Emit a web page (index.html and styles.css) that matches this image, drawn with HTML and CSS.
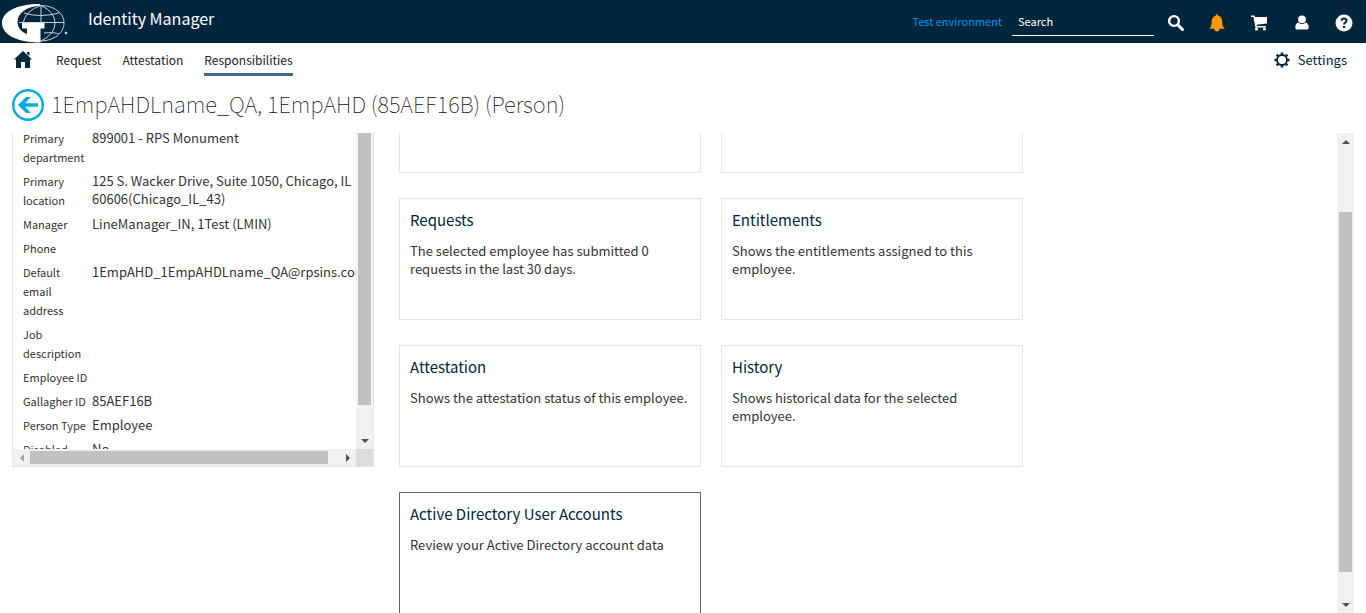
FILE: index.html
```html
<!DOCTYPE html>
<html lang="en">
<head>
<meta charset="utf-8">
<title>Identity Manager</title>
<link rel="stylesheet" href="styles.css">
</head>
<body>
<header class="topbar">
  <svg class="logo" viewBox="0 0 68 40" aria-hidden="true">
    <g fill="none" stroke="#c9d3da" stroke-width="1">
      <path d="M40 1.500C54 1.500 64 9 64 19S54 37 40 37"/>
      <path d="M41 1.500Q55 8 55 19T41 37M41 1.500Q26 6 23 19M41 1.500V19M19 18.500h45M24 9Q40 14 59 9M44 29Q54 28 59 30"/>
    </g>
    <path fill="#fff" d="M40 0C16 0 2 8 2 19s14 19.500 38.500 19.500V24.500h4V19H22v5.500h5V30C21 28 17.500 23 17.500 18 17.500 9 27 2.500 40 1.500z"/>
    <circle cx="66" cy="29" r="1.300" fill="#c9d3da"/>
  </svg>
  <span class="product">Identity Manager</span>
  <span class="environment">Test environment</span>
  <input class="search" type="text" placeholder="Search" aria-label="Search">
  <div class="tools">
    <button class="tool" aria-label="Search"><svg viewBox="0 0 18 18"><circle cx="7" cy="7" r="4.900" fill="none" stroke="#fff" stroke-width="2.400"/><path d="M11 11l4.500 4.500" stroke="#fff" stroke-width="3" stroke-linecap="round"/></svg></button>
    <button class="tool" aria-label="Notifications"><svg viewBox="1 0 16 17"><path fill="#ff9800" d="M8 .5c.8 0 1.200.5 1.200 1.100C12 2.200 13 4.500 13 7.500c0 3.500 1 5 2.500 6.500H10.500a2.500 2.500 0 0 1-5 0H.8C2 12.500 3 11 3 7.500 3 4.500 4 2.200 6.800 1.600 6.800 1 7.200.5 8 .5z"/></svg></button>
    <button class="tool" aria-label="Shopping cart"><svg viewBox="1 0 18 18"><path fill="#fff" d="M1 1.500h3.600l.4 1.500H17v6.500L6.500 10.800l.4 1.200H15.800v1.500H5.400L3.400 3H1z"/><circle cx="6.500" cy="15" r="1.600" fill="#fff"/><circle cx="14.500" cy="15" r="1.600" fill="#fff"/></svg></button>
    <button class="tool" aria-label="Profile"><svg viewBox="0 0 18 18"><circle cx="9" cy="5.300" r="3.900" fill="#fff"/><path fill="#fff" d="M5.500 8.500C6.500 9.700 7.600 10 9 10s2.500-.3 3.500-1.500c2.200.3 3.200 2.500 3.200 4.700 0 1.600-.8 2.300-2 2.300H4.300c-1.200 0-2-.7-2-2.300 0-2.200 1-4.400 3.200-4.700z"/></svg></button>
    <button class="tool" aria-label="Help"><svg viewBox="0 0 18 18"><circle cx="9" cy="9" r="8.500" fill="#fff"/><path d="M6.500 6.800C6.600 5.200 7.600 4.500 9 4.500s2.500.8 2.500 2.200c0 1.800-2.400 1.800-2.400 3.800" fill="none" stroke="#00263e" stroke-width="2"/><path d="M8 12h2.200v2H8z" fill="#00263e"/></svg></button>
  </div>
</header>
<nav class="menu">
  <a class="home" href="#" aria-label="Home"><svg viewBox="0 0 18 17"><path fill="#00263e" d="M9 0l9 8.500h-2V17h-5v-6H7v6H2V8.500H0zM13 1h2.500v4L13 3z"/></svg></a>
  <a class="menu-item" href="#">Request</a>
  <a class="menu-item" href="#">Attestation</a>
  <a class="menu-item current" href="#">Responsibilities</a>
  <a class="settings" href="#"><svg viewBox="0 0 16 16"><circle cx="8" cy="8" r="5" fill="none" stroke="#00263e" stroke-width="1.800"/><path stroke="#00263e" stroke-width="2.600" d="M8 .5v2M8 13.500v2M.5 8h2M13.500 8h2M2.700 2.700l1.400 1.400M11.900 11.900l1.400 1.400M2.700 13.300l1.400-1.400M11.900 4.100l1.400-1.400"/></svg>Settings</a>
</nav>
<div class="heading">
  <button class="back" aria-label="Back"><svg viewBox="0 0 32 32"><circle cx="16" cy="16" r="14.800" fill="#fff" stroke="#04aada" stroke-width="2.400"/><path fill="#04aada" d="M6 16l8-8h5l-6 6.300h13v3.400H13l6 6.300h-5z"/></svg></button>
  <h1>1EmpAHDLname_QA, 1EmpAHD (85AEF16B) (Person)</h1>
</div>
<main class="content">
  <section class="panel">
    <div class="panel-view">
      <table class="details">
        <tr><th scope="row">Primary department</th><td>899001 - RPS Monument</td></tr>
        <tr><th scope="row">Primary location</th><td>125 S. Wacker Drive, Suite 1050, Chicago, IL<br>60606(Chicago_IL_43)</td></tr>
        <tr><th scope="row">Manager</th><td>LineManager_IN, 1Test (LMIN)</td></tr>
        <tr><th scope="row">Phone</th><td></td></tr>
        <tr><th scope="row">Default email address</th><td>1EmpAHD_1EmpAHDLname_QA@rpsins.com</td></tr>
        <tr><th scope="row">Job description</th><td></td></tr>
        <tr><th scope="row">Employee ID</th><td></td></tr>
        <tr><th scope="row">Gallagher ID</th><td>85AEF16B</td></tr>
        <tr><th scope="row">Person Type</th><td>Employee</td></tr>
        <tr><th scope="row">Disabled</th><td>No</td></tr>
      </table>
    </div>
    <div class="bar vertical"><div class="thumb panel-thumb-v"></div><button class="arrow down" aria-label="Scroll down"></button></div>
    <div class="bar horizontal"><button class="arrow left" aria-label="Scroll left"></button><div class="thumb panel-thumb-h"></div><button class="arrow right" aria-label="Scroll right"></button></div>
    <div class="corner"></div>
  </section>
  <section class="cards-view">
    <div class="cards">
      <article class="card"></article>
      <article class="card"></article>
      <article class="card"><h2>Requests</h2><p>The selected employee has submitted 0 requests in the last 30 days.</p></article>
      <article class="card"><h2>Entitlements</h2><p>Shows the entitlements assigned to this employee.</p></article>
      <article class="card"><h2>Attestation</h2><p>Shows the attestation status of this employee.</p></article>
      <article class="card"><h2>History</h2><p>Shows historical data for the selected employee.</p></article>
      <article class="card active"><h2>Active Directory User Accounts</h2><p>Review your Active Directory account data</p></article>
    </div>
  </section>
  <div class="bar vertical page-bar"><button class="arrow up" aria-label="Scroll up"></button><div class="page-track"><div class="thumb"></div></div><button class="arrow down" aria-label="Scroll down"></button></div>
</main>
</body>
</html>
```
FILE: styles.css
```css
* { box-sizing: border-box; }
body {
  margin: 0;
  height: 100vh;
  display: flex;
  flex-direction: column;
  overflow: hidden;
  background: #fff;
  color: #333;
  font: 13px/18px "Noto Sans CJK SC", "Noto Sans", sans-serif;
}
button { padding: 0; border: 0; background: none; }
a { color: inherit; text-decoration: none; }
svg { display: block; width: 100%; height: 100%; }

.topbar {
  flex: none;
  display: flex;
  align-items: center;
  height: 43px;
  padding-right: 13px;
  background: #00263e;
  color: #fff;
}
.topbar .logo { width: 68px; height: 40px; margin-top: 5px; }
.product { flex: 1; margin: 0 0 8px 20px; font-size: 16px; line-height: 20px; }
.environment { margin-bottom: 2px; color: #0094ea; font-size: 11px; }
.search {
  width: 142px;
  height: 28px;
  margin: 0 13px 0 10px;
  padding: 0 6px;
  border: 0;
  border-bottom: 1px solid #fff;
  background: none;
  color: #fff;
  font: inherit;
  font-size: 11px;
}
.search::placeholder { color: #fff; opacity: 1; }
.tools { display: flex; gap: 24px; padding-top: 2px; }
.tool { width: 18px; height: 18px; }

.menu {
  flex: none;
  display: flex;
  align-items: flex-start;
  height: 42px;
  padding: 6px 19px 0 14px;
  color: #222;
  font-size: 12px;
}
.home { width: 18px; height: 17px; margin: 2px 24px 0 0; }
.menu-item { margin-right: 21px; padding-bottom: 3px; line-height: 21px; border-bottom: 3px solid transparent; }
.menu-item.current { border-color: #41678a; }
.settings { display: flex; align-items: center; gap: 8px; margin-left: auto; color: #00263e; font-size: 13px; line-height: 21px; }
.settings svg { width: 16px; height: 16px; }

.heading { flex: none; display: flex; align-items: center; gap: 7px; height: 48px; padding: 0 12px 8px; }
.back { width: 32px; height: 32px; }
h1 { margin: 0 0 4px; color: #111; font-size: 22px; line-height: 32px; font-weight: 100; }

.content { flex: 1; display: flex; align-items: flex-start; min-height: 0; padding: 0 12px; }
.panel {
  flex: none;
  display: grid;
  grid-template-columns: 343px 17px;
  grid-template-rows: 316px 17px;
  border: 1px solid #e5e5e5;
  border-top: 0;
}
.panel-view { overflow: hidden; }
.details { width: 360px; margin: -4px 0 0 10px; border-collapse: collapse; table-layout: fixed; }
.details th, .details td { padding: 0 0 5px; text-align: left; vertical-align: top; }
.details th { width: 69px; padding-right: 4px; font-size: 11px; line-height: 19px; font-weight: 400; }
.details td { white-space: nowrap; }

.bar { display: flex; background: #f1f1f1; }
.vertical { flex-direction: column; justify-content: space-between; align-items: center; }
.horizontal { align-items: center; }
.thumb { width: 13px; background: #c1c1c1; }
.panel-thumb-v { height: 272px; }
.panel-thumb-h { flex: 1; height: 13px; margin-right: 11px; }
.arrow { display: grid; place-items: center; flex: none; width: 17px; height: 17px; }
.arrow::before { content: ""; border: 4px solid transparent; }
.up::before { border-top: 0; border-bottom-color: #505050; }
.down::before { border-bottom: 0; border-top-color: #505050; }
.left::before { border-left: 0; border-right-color: #a3a3a3; }
.right::before { border-right: 0; border-left-color: #505050; }
.corner { background: #dcdcdc; }

.cards-view { flex: 1; align-self: stretch; overflow: hidden; padding-left: 25px; }
.cards { display: grid; grid-template-columns: 302px 302px; grid-auto-rows: 122px; gap: 25px 20px; margin-top: -82px; }
.card { padding: 10px; border: 1px solid #e5e5e5; }
.card.active { border-color: #666; }
h2 { margin: 0 0 11px; color: #00263e; font-size: 15px; line-height: 22px; font-weight: 400; }
p { margin: 0; }
.page-bar { align-self: stretch; width: 17px; }
.page-track { flex: 1; width: 13px; padding: 62px 0 24px; }
.page-track .thumb { height: 100%; }
```
